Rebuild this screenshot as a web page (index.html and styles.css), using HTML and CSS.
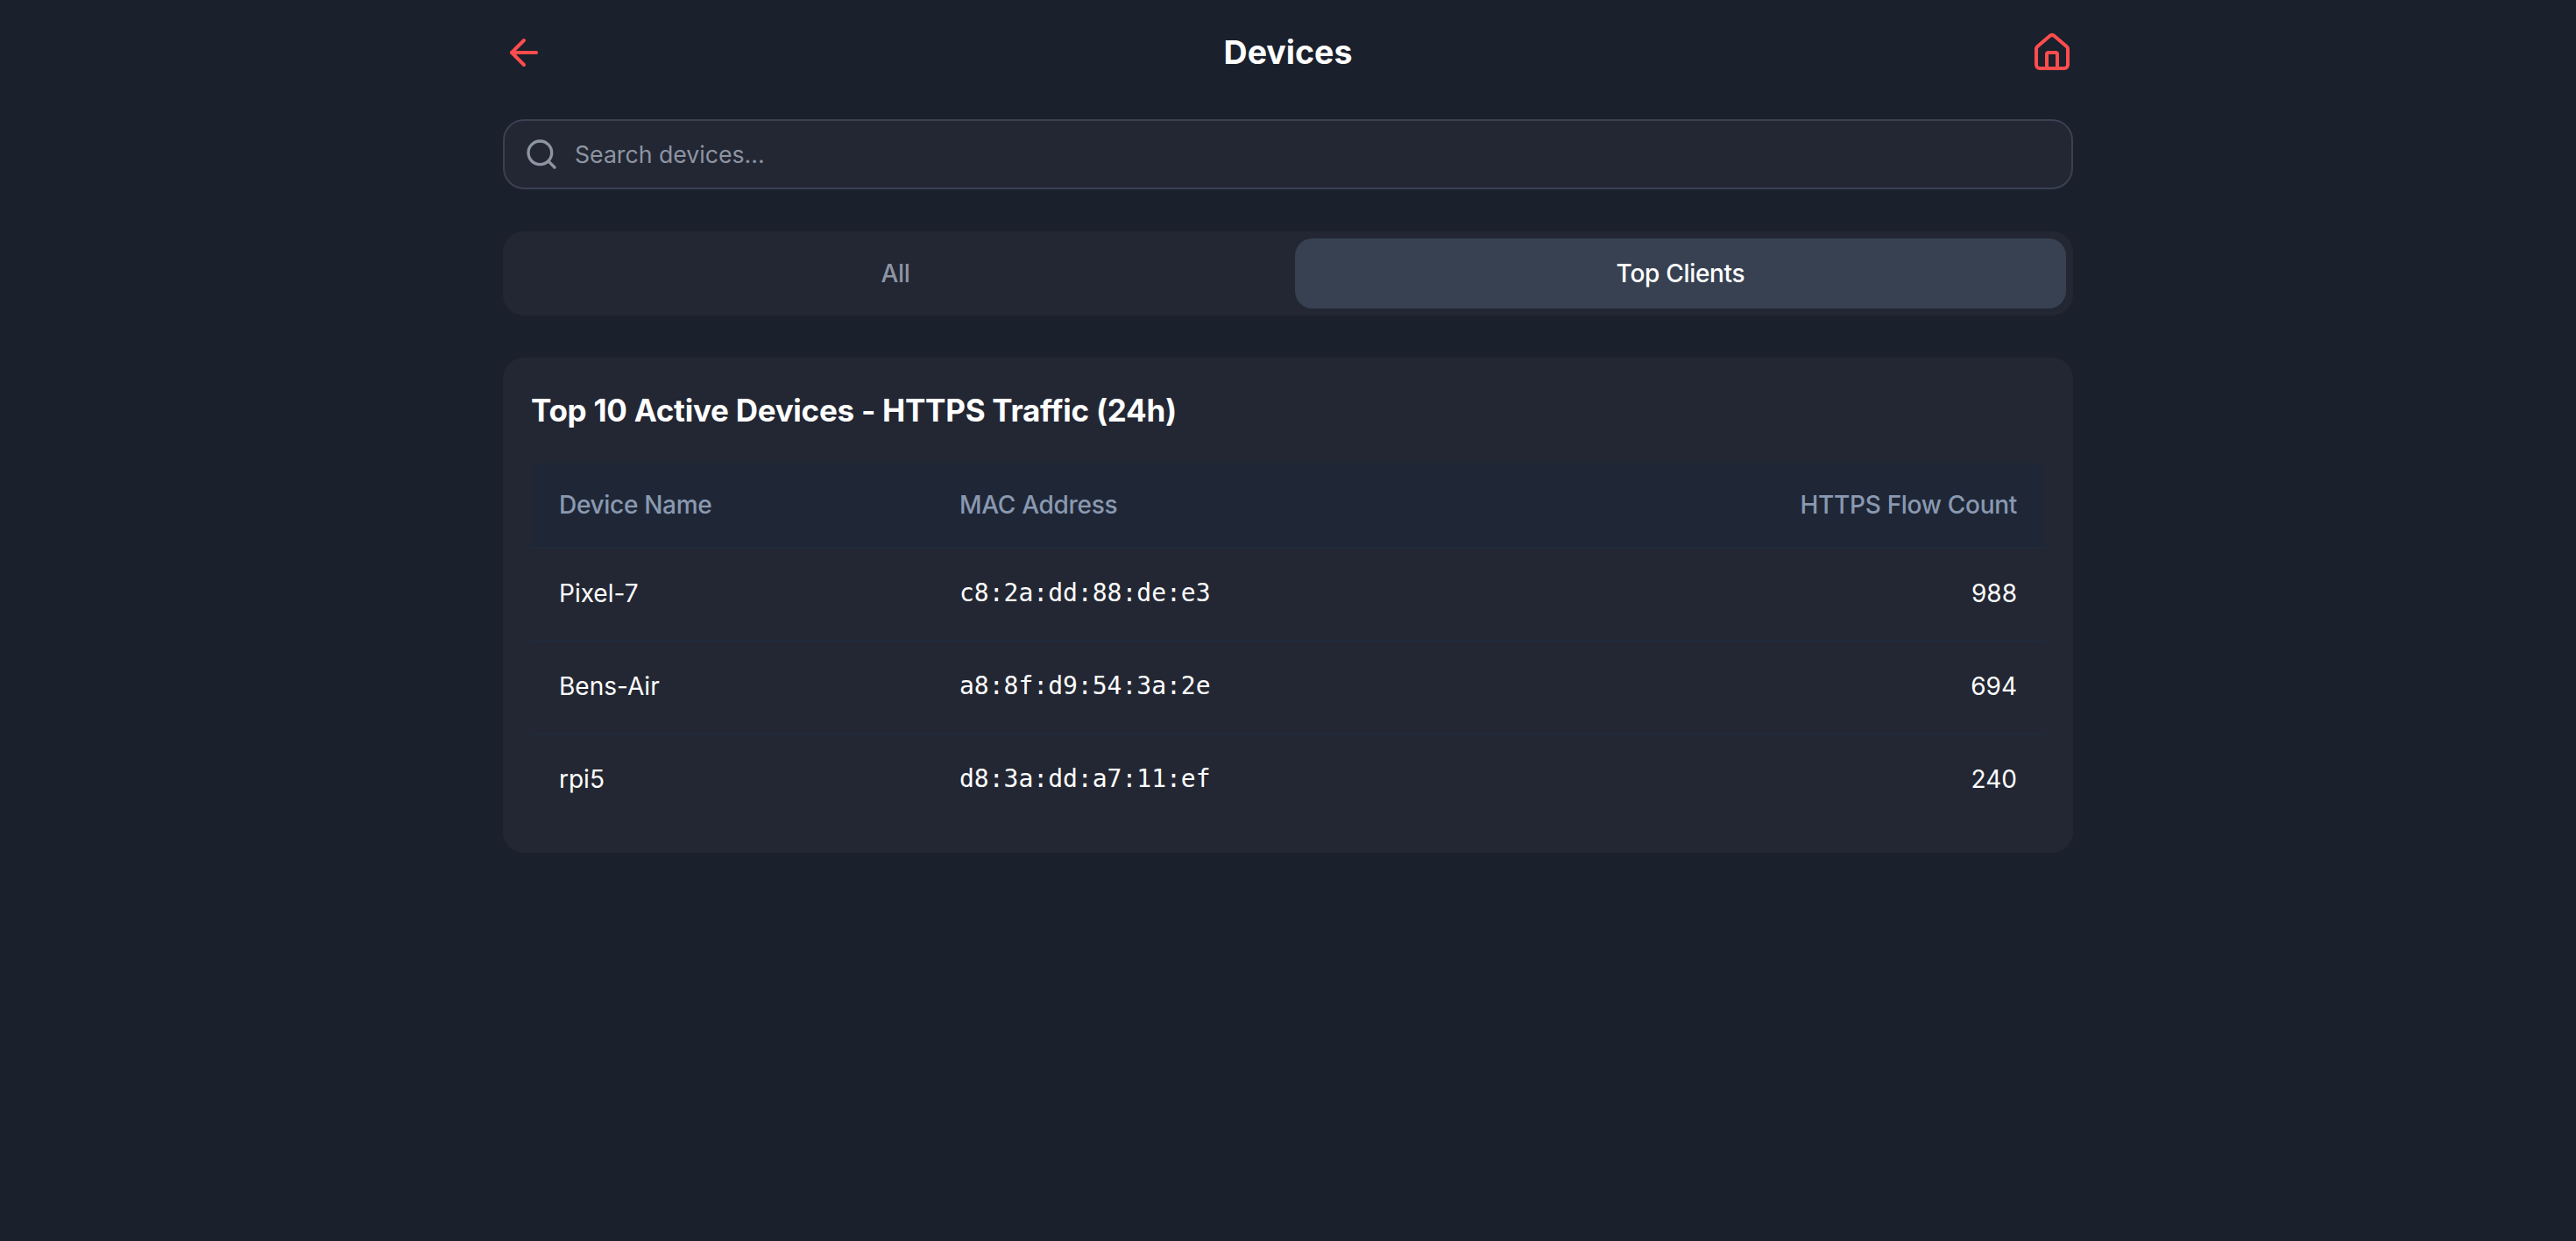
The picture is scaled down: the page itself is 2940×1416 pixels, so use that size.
FILE: index.html
```html
<!DOCTYPE html>
<html lang="en">
<head>
  <meta charset="UTF-8" />
  <title>Devices</title>
  <link rel="stylesheet" href="styles.css">
</head>
<body>
  <div class="container">
    <!-- Header -->
    <header class="header">
      <a class="icon-btn" href="#">
        <svg class="icon" viewBox="0 0 24 24"><path d="m12 19-7-7 7-7"/><path d="M19 12H5"/></svg>
      </a>
      <h1>Devices</h1>
      <a class="icon-btn" href="#">
        <svg class="icon" viewBox="0 0 24 24"><path d="M15 21v-8a1 1 0 0 0-1-1h-4a1 1 0 0 0-1 1v8"/><path d="M3 10a2 2 0 0 1 .709-1.528l7-5.999a2 2 0 0 1 2.582 0l7 5.999A2 2 0 0 1 21 10v9a2 2 0 0 1-2 2H5a2 2 0 0 1-2-2z"/></svg>
      </a>
    </header>

    <!-- Search -->
    <div class="search">
      <svg class="search-icon" viewBox="0 0 24 24"><circle cx="11" cy="11" r="8"/><path d="m21 21-4.3-4.3"/></svg>
      <input type="text" placeholder="Search devices..." />
    </div>

    <!-- Tabs -->
    <div class="tabs">
      <button class="tab">All</button>
      <button class="tab active">Top Clients</button>
    </div>

    <!-- Top clients -->
    <section class="card">
      <h2>Top 10 Active Devices - HTTPS Traffic (24h)</h2>
      <table>
        <thead>
          <tr>
            <th class="col-name">Device Name</th>
            <th>MAC Address</th>
            <th class="num">HTTPS Flow Count</th>
          </tr>
        </thead>
        <tbody>
          <tr>
            <td>Pixel-7</td>
            <td class="mac">c8:2a:dd:88:de:e3</td>
            <td class="num">988</td>
          </tr>
          <tr>
            <td>Bens-Air</td>
            <td class="mac">a8:8f:d9:54:3a:2e</td>
            <td class="num">694</td>
          </tr>
          <tr>
            <td>rpi5</td>
            <td class="mac">d8:3a:dd:a7:11:ef</td>
            <td class="num">240</td>
          </tr>
        </tbody>
      </table>
    </section>
  </div>
</body>
</html>
```

FILE: styles.css
```css
* {
  box-sizing: border-box;
}
body {
  margin: 0;
  min-height: 100vh;
  background-color: #1a202c;
  color: #fff;
  font-family: Inter, "Noto Sans", sans-serif;
}
.container {
  width: 1792px;
  margin: 0 auto;
  padding-top: 36px;
}
.header {
  display: flex;
  justify-content: space-between;
  align-items: center;
  margin-bottom: 52px;
}
.header h1 {
  margin: 0;
  font-size: 37.5px;
  line-height: 48px;
  font-weight: 700;
}
.icon-btn {
  display: block;
  height: 48px;
}
.icon {
  display: block;
  width: 48px;
  height: 48px;
  fill: none;
  stroke: #ff4d4d;
  stroke-width: 2;
  stroke-linecap: round;
  stroke-linejoin: round;
}
.search {
  display: flex;
  align-items: center;
  gap: 18px;
  height: 80px;
  padding: 0 22px;
  margin-bottom: 48px;
  background: #232733;
  border: 2px solid #3a4152;
  border-radius: 24px;
}
.search-icon {
  width: 40px;
  height: 40px;
  flex-shrink: 0;
  fill: none;
  stroke: #8d95a3;
  stroke-width: 2;
  stroke-linecap: round;
  stroke-linejoin: round;
}
.search input {
  flex: 1;
  background: none;
  border: none;
  outline: none;
  padding: 0;
  color: #fff;
  font-family: inherit;
  font-size: 26.67px;
}
.search input::placeholder {
  color: #8d95a3;
  opacity: 1;
}
.tabs {
  display: flex;
  gap: 16px;
  padding: 8px;
  margin-bottom: 48px;
  background: #232733;
  border-radius: 24px;
}
.tab {
  flex: 1;
  height: 80px;
  background: none;
  border: none;
  border-radius: 20px;
  color: #8d95a3;
  font-family: inherit;
  font-size: 28px;
  font-weight: 500;
  letter-spacing: -0.3px;
}
.tab.active {
  background: #374151;
  color: #fff;
}
.card {
  padding: 32px;
  background: #232733;
  border-radius: 24px;
}
.card h2 {
  margin: 0 0 32px;
  font-size: 35px;
  line-height: 56px;
  font-weight: 650;
  letter-spacing: -0.25px;
}
table {
  width: 100%;
  border-collapse: collapse;
}
th, td {
  text-align: left;
  font-size: 28px;
  line-height: 40px;
  border-bottom: 2px solid #1f2a3b;
}
th {
  padding: 28px 32px;
  background: #1f2737;
  color: #8a99b0;
  font-weight: 500;
  letter-spacing: -0.3px;
}
td {
  padding: 31px 32px 33px;
  color: #fff;
}
tbody tr:last-child td {
  padding-bottom: 32px;
  border-bottom: none;
}
.col-name {
  width: 457px;
}
.mac {
  font-family: "DejaVu Sans Mono", monospace;
}
.num {
  text-align: right;
}
```
